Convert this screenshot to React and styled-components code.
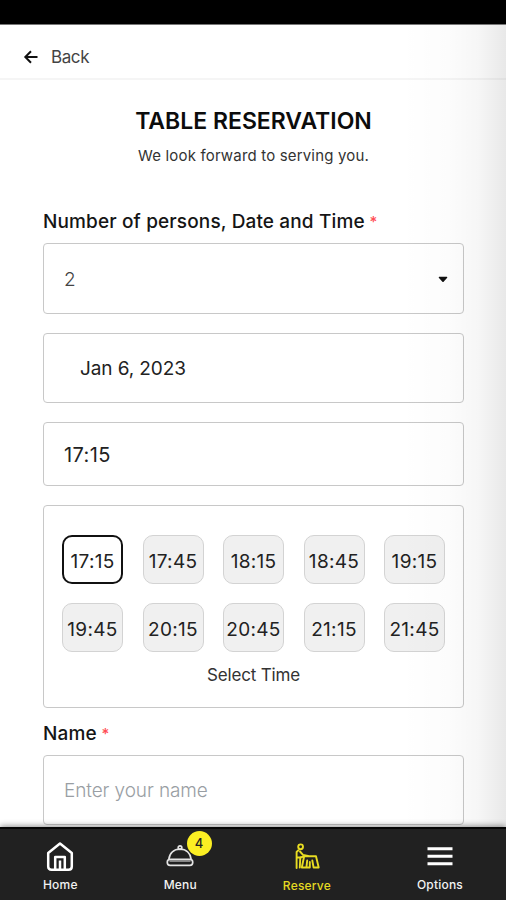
import React, { useState } from 'react'
import styled, { createGlobalStyle } from 'styled-components'

const GlobalStyle = createGlobalStyle`
  * {
    box-sizing: border-box;
  }
  body {
    margin: 0;
    background: #fff;
    font-family: Inter, "Liberation Sans", sans-serif;
  }
`

const Screen = styled.div`
  position: relative;
  display: flex;
  flex-direction: column;
  height: 900px;
  overflow: hidden;
  background: #fff;
`

const StatusBar = styled.div`
  flex: none;
  height: 25px;
  background: #000;
  border-bottom: 1px solid #777;
`

const Header = styled.header`
  flex: none;
  display: flex;
  align-items: center;
  gap: 12px;
  height: 55px;
  padding: 11px 23px 0;
  border-bottom: 2px solid #f5f5f5;
`

const BackLabel = styled.span`
  font-size: 17px;
  line-height: 22px;
  color: #444;
  letter-spacing: -0.4px;
`

const Content = styled.main`
  flex: 1;
  min-height: 0;
  overflow: hidden;
  padding: 0 42px 0 43px;
`

const Title = styled.h1`
  margin: 27px 0 0;
  font-size: 23px;
  line-height: 28px;
  font-weight: 600;
  text-align: center;
  color: #0c0c0c;
`

const SubTitle = styled.p`
  margin: 11px 0 0;
  font-size: 15px;
  line-height: 20px;
  letter-spacing: 0.17px;
  text-align: center;
  color: #333;
`

const Label = styled.div`
  margin-top: ${props => props.$top};
  font-size: 19px;
  line-height: 24px;
  font-weight: 500;
  letter-spacing: 0.14px;
  color: #151515;
  white-space: nowrap;

  span {
    margin-left: -0.5px;
    font-size: 15px;
    line-height: 1;
    vertical-align: 1px;
    color: #ff4d55;
  }
`

const Field = styled.div`
  display: flex;
  align-items: center;
  justify-content: space-between;
  height: ${props => props.$height};
  margin-top: ${props => props.$top || '19px'};
  padding: 1px 15px 0 ${props => props.$indent || '20px'};
  border: 1px solid #c8c8c8;
  border-radius: 4px;
  font-size: ${props => props.$size || '19px'};
  font-weight: ${props => props.$weight || 400};
  color: ${props => props.$color || '#222'};
  letter-spacing: ${props => props.$spacing || '0'};
`

const TimePanel = styled.div`
  height: 203px;
  margin-top: 19px;
  padding: 29px 18px 0 18px;
  border: 1px solid #c8c8c8;
  border-radius: 4px;
`

const Slots = styled.div`
  display: grid;
  grid-template-columns: repeat(5, 61px);
  grid-auto-rows: 49px;
  justify-content: space-between;
  row-gap: 19px;
`

const Slot = styled.button`
  padding: 3px 0 0;
  border: ${props => props.$active ? '2px solid #111' : '1.5px solid #d3d3d3'};
  border-radius: 10px;
  background: ${props => props.$active ? '#fff' : '#f0f0f0'};
  font-family: inherit;
  font-size: 19px;
  letter-spacing: 0.3px;
  color: #222;
`

const SelectTime = styled.p`
  margin: 11px 0 0;
  font-size: 17px;
  line-height: 24px;
  letter-spacing: -0.15px;
  text-align: center;
  color: #333;
`

const EdgeShade = styled.div`
  position: absolute;
  top: 25px;
  right: 0;
  bottom: 73px;
  width: 106px;
  pointer-events: none;
  background: linear-gradient(to right, rgba(0, 0, 0, 0), rgba(0, 0, 0, 0.012) 45%, rgba(0, 0, 0, 0.035) 74%, rgba(0, 0, 0, 0.09));
`

const Nav = styled.nav`
  position: relative;
  flex: none;
  display: flex;
  justify-content: space-around;
  height: 73px;
  padding-top: 13px;
  border-top: 2px solid #050505;
  background: #212121;
  box-shadow: 0 -1px 6px rgba(0, 0, 0, 0.45);
`

const NavItem = styled.div`
  position: relative;
  display: flex;
  flex-direction: column;
  align-items: center;
  gap: ${props => props.$active ? '6px' : '5px'};
  font-size: 12px;
  line-height: 16px;
  font-weight: 500;
  letter-spacing: 0.2px;
  color: ${props => props.$active ? '#e5da22' : '#f2f2f2'};

  svg {
    display: block;
  }
`

const Badge = styled.span`
  position: absolute;
  top: -11px;
  left: 23px;
  width: 25px;
  height: 25px;
  border-radius: 50%;
  background: #fbee23;
  font-size: 13px;
  line-height: 25px;
  text-align: center;
  color: #222;
`

const BackIcon = () => (
  <svg width="16" height="16" viewBox="0 0 16 16" fill="none" stroke="#111" strokeWidth="2">
    <path d="M14.5 8H3M8 2.2L2.3 8L8 13.8" />
  </svg>
)

const CaretIcon = () => (
  <svg width="10" height="7" viewBox="0 0 10 7">
    <path d="M1.2 0.7H8.8Q9.8 0.9 9 1.9L5.6 5.7Q5 6.3 4.4 5.7L1 1.9Q0.2 0.9 1.2 0.7Z" fill="#111" />
  </svg>
)

const HomeIcon = () => (
  <svg width="28" height="30" viewBox="0 0 28 30" fill="none" stroke="#fff" strokeWidth="2.5" strokeLinejoin="round">
    <path d="M2.2 11L14 1.5L25.8 11V24.5Q25.8 27.8 22.5 27.8H5.5Q2.2 27.8 2.2 24.5Z" />
    <path d="M9.2 27V15H18.8V27M14 18.5V27" />
  </svg>
)

const MenuIcon = () => (
  <svg width="28" height="30" viewBox="0 0 28 30" fill="none" stroke="#e4e4e4" strokeWidth="1.7">
    <path d="M2.8 17.5C3.6 11 8 7.2 14 7.2S24.4 11 25.2 17.5" />
    <circle cx="14" cy="5.6" r="1.8" />
    <rect x="1.3" y="17.3" width="25.4" height="6" rx="2.8" />
    <path d="M3.5 19H24.5" stroke="#999" />
  </svg>
)

const ReserveIcon = () => (
  <svg width="26" height="30" viewBox="0 0 26 30" fill="none" stroke="#e8dc22" strokeWidth="1.9" strokeLinejoin="round" strokeLinecap="round">
    <circle cx="6.6" cy="4.8" r="2.4" />
    <path d="M4.4 8.3L2.6 10V26M6 9.5L9 12.8L14 14M3 15.5H6.3L5.8 25.5" />
    <path d="M6.5 15.5L9.8 14.3H22L24.7 25.5H19.6L18.3 18.5M13.2 18.5L12.4 25.5H7.8L10 15M15.8 20V25.5H12.6" />
  </svg>
)

const OptionsIcon = () => (
  <svg width="26" height="30" viewBox="0 0 26 30" fill="none" stroke="#fff" strokeWidth="3">
    <path d="M0.5 6.8H25.5M0.5 14.3H25.5M0.5 21.7H25.5" />
  </svg>
)

const times = ['17:15', '17:45', '18:15', '18:45', '19:15', '19:45', '20:15', '20:45', '21:15', '21:45']

const App = () => {
  const [time, setTime] = useState('17:15')

  return (
    <Screen>
      <GlobalStyle />
      <StatusBar />
      <Header>
        <BackIcon />
        <BackLabel>Back</BackLabel>
      </Header>
      <Content>
        <Title>TABLE RESERVATION</Title>
        <SubTitle>We look forward to serving you.</SubTitle>

        <Label $top="44px">Number of persons, Date and Time <span>*</span></Label>
        <Field $height="71px" $top="9px" $weight={300} $color="#444">2 <CaretIcon /></Field>
        <Field $height="70px" $indent="36px" $spacing="-0.1px">Jan 6, 2023</Field>
        <Field $height="64px" $size="20px" $spacing="0.4px">{time}</Field>
        <TimePanel>
          <Slots>
            {times.map(slot => (
              <Slot key={slot} $active={slot === time} onClick={() => setTime(slot)}>{slot}</Slot>
            ))}
          </Slots>
          <SelectTime>Select Time</SelectTime>
        </TimePanel>

        <Label $top="14px">Name <span>*</span></Label>
        <Field $height="70px" $top="9px" $weight={300} $color="#999ea3" $spacing="-0.1px">Enter your name</Field>
      </Content>
      <EdgeShade />
      <Nav>
        <NavItem><HomeIcon />Home</NavItem>
        <NavItem><MenuIcon /><Badge>4</Badge>Menu</NavItem>
        <NavItem $active><ReserveIcon />Reserve</NavItem>
        <NavItem><OptionsIcon />Options</NavItem>
      </Nav>
    </Screen>
  )
}

export default App
